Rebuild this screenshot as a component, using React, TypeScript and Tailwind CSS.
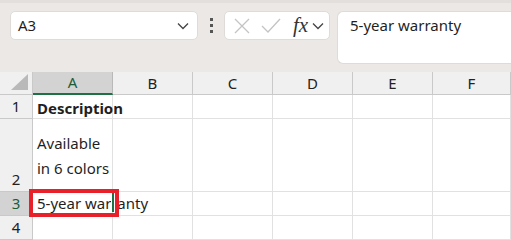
import React from 'react'

const font = { fontFamily: '"Noto Sans", "Open Sans", sans-serif' }

const cols = ['A', 'B', 'C', 'D', 'E', 'F']

function Chevron({ className = '' }: { className?: string }) {
  return (
    <svg width="12" height="8" viewBox="0 0 12 8" className={className}>
      <path d="M1 1.5 L6 6.5 L11 1.5" fill="none" stroke="#444" strokeWidth="1.3" />
    </svg>
  )
}

function Row({
  num,
  height,
  selected,
  bottomAlign,
  children,
}: {
  num: number
  height: string
  selected?: boolean
  bottomAlign?: boolean
  children?: React.ReactNode
}) {
  return (
    <div className={`flex ${height}`}>
      <div
        className={`w-[33px] shrink-0 flex justify-center border-r border-b border-[#c9c9c9] text-[15px] ${
          bottomAlign ? 'items-end pb-[1px]' : 'items-center'
        } ${selected ? 'bg-[#d3d3d3] text-[#1c5c38]' : 'bg-[#f0f0f0] text-[#222]'}`}
      >
        {num}
      </div>
      {cols.map((c, i) => (
        <div
          key={c}
          className={`shrink-0 border-r border-b border-[#e1e1e1] ${i === 5 ? 'w-[78px]' : 'w-[80px]'}`}
        >
          {i === 0 ? children : null}
        </div>
      ))}
    </div>
  )
}

export default function App() {
  return (
    <div className="relative w-[511px] h-[240px] overflow-hidden bg-white text-[#1f1f1f]" style={font}>
      {/* Formula bar area */}
      <div className="h-[72px] bg-[#ebe8e6] border-t-[3px] border-[#e2dfdd]">
        <div className="flex items-start pl-[10px] pt-[8px] gap-0">
          <div className="w-[188px] h-[29px] bg-white rounded-[5px] border border-[#dedbd9] flex items-center justify-between pl-[7px] pr-[8px]">
            <span className="text-[15px]">A3</span>
            <Chevron />
          </div>
          <div className="w-[26px] h-[29px] flex flex-col items-center justify-center gap-[3px]">
            <div className="w-[3px] h-[3px] bg-[#555]" />
            <div className="w-[3px] h-[3px] bg-[#555]" />
            <div className="w-[3px] h-[3px] bg-[#555]" />
          </div>
          <div className="w-[106px] h-[29px] bg-white rounded-[5px] border border-[#dedbd9] flex items-center pl-[8px]">
            <svg width="18" height="18" viewBox="0 0 18 18">
              <path d="M2 2 L16 16 M16 2 L2 16" stroke="#c4c4c4" strokeWidth="1.3" fill="none" />
            </svg>
            <svg width="22" height="18" viewBox="0 0 22 18" className="ml-[9px]">
              <path d="M2 9 L8 15 L20 2" stroke="#c4c4c4" strokeWidth="1.3" fill="none" />
            </svg>
            <span
              className="ml-[11px] text-[21px] italic text-[#333] leading-none"
              style={{ fontFamily: '"Liberation Serif", serif' }}
            >
              fx
            </span>
            <Chevron className="ml-[4px]" />
          </div>
          <div className="ml-[7px] flex-1 h-[53px] bg-white rounded-l-[6px] border border-r-0 border-[#dedbd9] pl-[12px] pt-[1px]">
            <span className="text-[15px]">5-year warranty</span>
          </div>
        </div>
      </div>

      {/* Column headers */}
      <div className="flex h-[23px]">
        <div className="w-[33px] shrink-0 bg-[#f0f0f0] border-r border-b border-[#c9c9c9] flex items-end justify-end p-[3px]">
          <svg width="20" height="18" viewBox="0 0 20 18">
            <path d="M19 1 L19 17 L2 17 Z" fill="#b9b9b9" />
          </svg>
        </div>
        {cols.map((c, i) => (
          <div
            key={c}
            className={`shrink-0 flex items-center justify-center text-[15px] border-r ${
              i === 5 ? 'w-[78px]' : 'w-[80px]'
            } ${
              i === 0
                ? 'bg-[#d3d3d3] border-[#b9b9b9] border-b-2 border-b-[#1e7145] text-[#1c5c38]'
                : 'bg-[#f0f0f0] border-[#c9c9c9] border-b border-b-[#c9c9c9] text-[#222]'
            }`}
          >
            {c}
          </div>
        ))}
      </div>

      <Row num={1} height="h-[24px]">
        <div className="pl-[4px] text-[15px] font-bold leading-[26px] whitespace-nowrap">Description</div>
      </Row>
      <Row num={2} height="h-[73px]" bottomAlign>
        <div className="pl-[4px] pt-[12px] text-[15px] leading-[25px]">
          <div>Available</div>
          <div>in 6 colors</div>
        </div>
      </Row>
      <Row num={3} height="h-[24px]" selected>
        <div className="pl-[4px] text-[15px] leading-[23px] whitespace-nowrap">5-year warranty</div>
      </Row>
      <Row num={4} height="h-[24px]" />

      {/* hidden glyph under the selection edge */}
      <div className="absolute left-[111px] top-[194px] w-[5px] h-[18px] bg-white" />
      <div className="absolute left-[112px] top-[193px] w-[2px] h-[19px] bg-[#1e7145]" />
      {/* red annotation */}
      <div className="absolute left-[29px] top-[189px] w-[90px] h-[28px] border-[4px] border-[#e8202a]" />
    </div>
  )
}
